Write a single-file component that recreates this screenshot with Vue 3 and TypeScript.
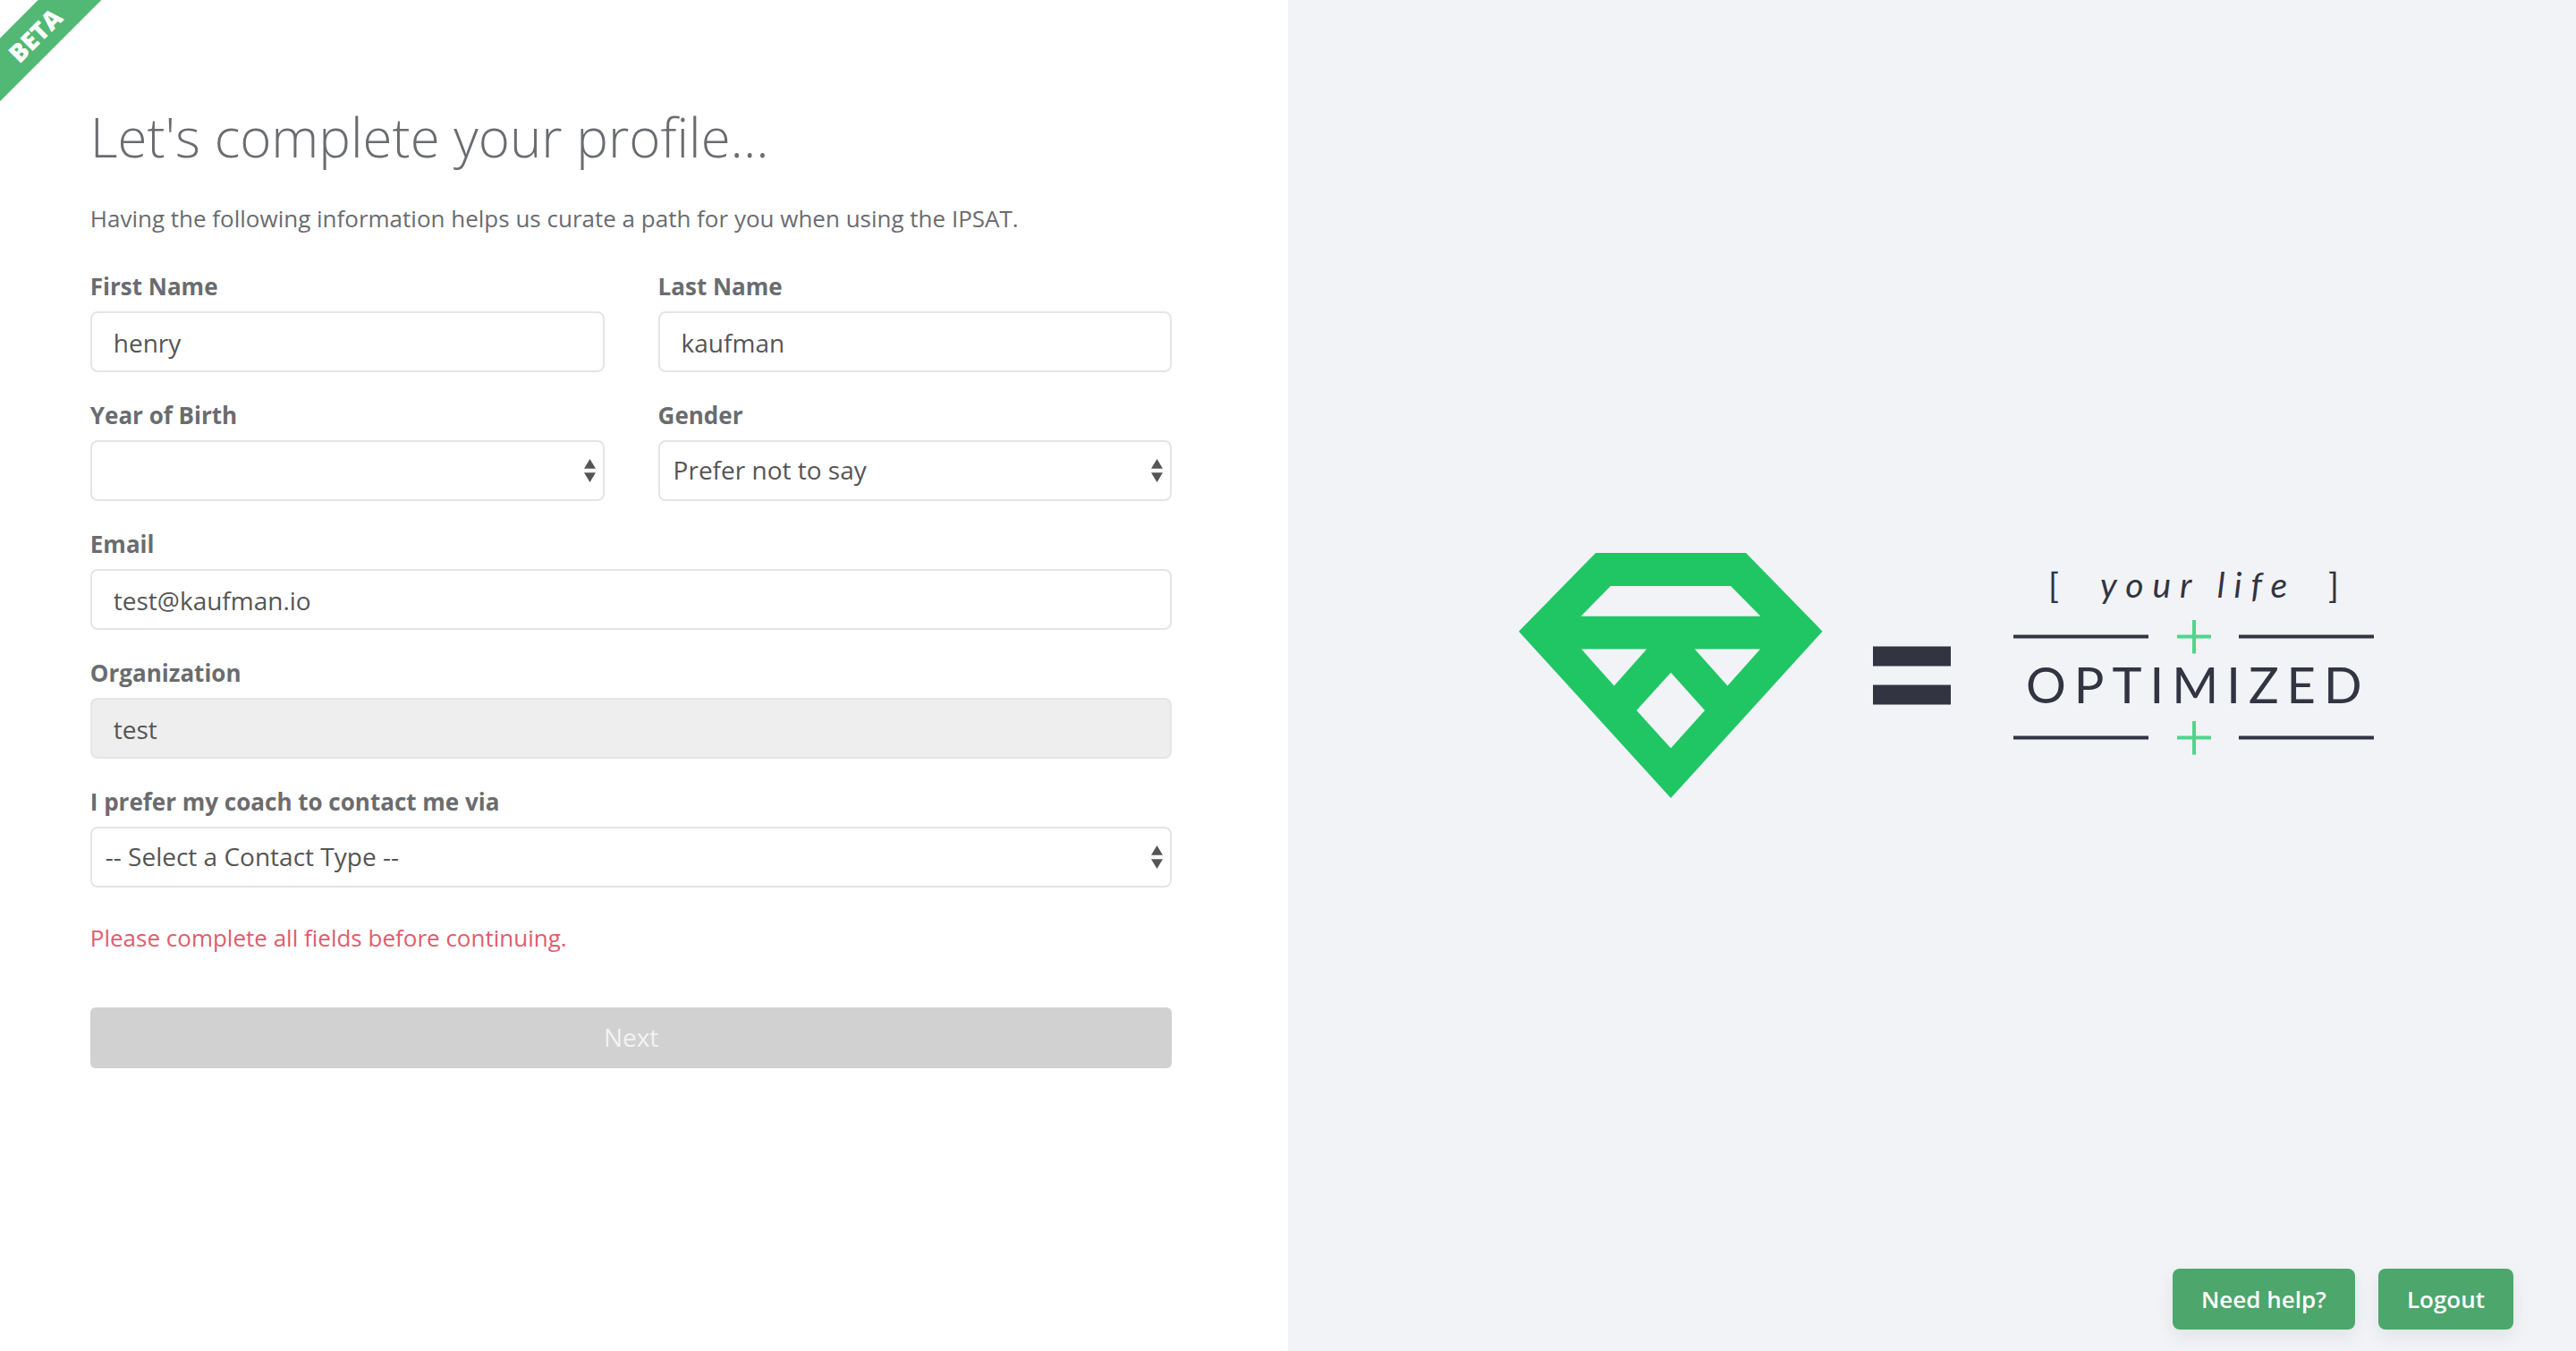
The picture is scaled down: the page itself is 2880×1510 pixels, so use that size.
<script setup lang="ts">
import { reactive } from 'vue'

interface Profile {
  firstName: string
  lastName: string
  birthYear: string
  gender: string
  email: string
  organization: string
  contactType: string
}

const profile = reactive<Profile>({
  firstName: 'henry',
  lastName: 'kaufman',
  birthYear: '',
  gender: 'Prefer not to say',
  email: 'test@kaufman.io',
  organization: 'test',
  contactType: '',
})

const genders: string[] = ['Prefer not to say']
</script>

<template>
  <main class="page">
    <div class="ribbon">BETA</div>

    <section class="profile">
      <h1>Let's complete your profile...</h1>
      <p class="intro">Having the following information helps us curate a path for you when using the IPSAT.</p>

      <form class="form" @submit.prevent>
        <div class="row">
          <div class="field">
            <label for="first-name">First Name</label>
            <input id="first-name" v-model="profile.firstName" type="text" />
          </div>
          <div class="field">
            <label for="last-name">Last Name</label>
            <input id="last-name" v-model="profile.lastName" type="text" />
          </div>
        </div>

        <div class="row">
          <div class="field">
            <label for="birth-year">Year of Birth</label>
            <div class="select">
              <select id="birth-year" v-model="profile.birthYear">
                <option value=""></option>
              </select>
              <svg class="arrows" viewBox="0 0 13 26" aria-hidden="true">
                <path d="M6.5 0 13 10.700H0zM0 15.300H13L6.500 26z" />
              </svg>
            </div>
          </div>
          <div class="field">
            <label for="gender">Gender</label>
            <div class="select">
              <select id="gender" v-model="profile.gender">
                <option v-for="g in genders" :key="g" :value="g">{{ g }}</option>
              </select>
              <svg class="arrows" viewBox="0 0 13 26" aria-hidden="true">
                <path d="M6.5 0 13 10.700H0zM0 15.300H13L6.500 26z" />
              </svg>
            </div>
          </div>
        </div>

        <div class="field">
          <label for="email">Email</label>
          <input id="email" v-model="profile.email" type="email" />
        </div>

        <div class="field">
          <label for="organization">Organization</label>
          <input id="organization" v-model="profile.organization" type="text" disabled />
        </div>

        <div class="field">
          <label for="contact-type">I prefer my coach to contact me via</label>
          <div class="select">
            <select id="contact-type" v-model="profile.contactType">
              <option value="">-- Select a Contact Type --</option>
            </select>
            <svg class="arrows" viewBox="0 0 13 26" aria-hidden="true">
              <path d="M6.5 0 13 10.700H0zM0 15.300H13L6.500 26z" />
            </svg>
          </div>
        </div>

        <p class="error" role="alert">Please complete all fields before continuing.</p>
        <button class="next" type="submit" disabled>Next</button>
      </form>
    </section>

    <aside class="brand">
      <svg class="logo" viewBox="0 0 1008 320" role="img" aria-label="Your life optimized">
        <path
          class="gem"
          fill-rule="evenodd"
          d="M128 23H296L381.500 110.700 212 297 42 110.700ZM144.700 60 111.500 93.700H312.300L279 60ZM112 130.500 148.600 171.500 185 130.500ZM238.700 130.500 275.400 171.500 312 130.500ZM212 156.700 173.700 199 212 241.300 250 199Z"
        />
        <path class="ink" d="M438 127.500H525V149.500H438ZM438 170.500H525V192.500H438Z" />
        <path class="ink" d="M595 114.500H746V118.500H595ZM847 114.500H998V118.500H847ZM595 227.500H746V231.500H595ZM847 227.500H998V231.500H847Z" />
        <path class="plus" d="M778 116.500H816M797 98V135.500M778 229.500H816M797 211V248.500" />
        <text class="ink life" x="634" y="73">[</text>
        <text class="ink life slanted" x="692" y="73">your life</text>
        <text class="ink life" x="947" y="73">]</text>
        <text class="ink optimized" x="609" y="191">OPTIMIZED</text>
      </svg>
    </aside>

    <nav class="actions">
      <button type="button">Need help?</button>
      <button type="button">Logout</button>
    </nav>
  </main>
</template>

<style>
body {
  margin: 0;
  background: #fff;
}
</style>

<style scoped>
.page {
  position: relative;
  display: grid;
  grid-template-columns: 1fr 1fr;
  min-height: 100vh;
  overflow: hidden;
  color: #6a6c6f;
  font-family: "Open Sans", "Noto Sans", sans-serif;
  font-size: 26px;
}

.page * {
  box-sizing: border-box;
}

.ribbon {
  position: absolute;
  top: 14px;
  left: -61px;
  width: 200px;
  background: #52b874;
  color: #fff;
  font-size: 28px;
  font-weight: 800;
  line-height: 50px;
  text-align: center;
  transform: rotate(-45deg);
}

.profile {
  min-width: 0;
  padding: 111px 9% 80px 7%;
}

h1 {
  margin: 0;
  font-size: 60px;
  font-weight: 300;
  line-height: 84px;
}

.intro {
  margin: 29px 0 0;
  line-height: 40px;
}

.form {
  display: flex;
  flex-direction: column;
  gap: 26px;
  margin-top: 34px;
}

.row {
  display: grid;
  grid-template-columns: 1fr 1fr;
  gap: 60px;
}

.field {
  display: flex;
  flex-direction: column;
  gap: 6px;
  min-width: 0;
}

label {
  font-weight: 700;
  line-height: 44px;
}

input,
select {
  width: 100%;
  height: 68px;
  margin: 0;
  border: 2px solid #e4e5e7;
  border-radius: 8px;
  background: #fff;
  color: #555;
  font: inherit;
  font-size: 28px;
}

input {
  padding: 2px 24px 0;
}

input:disabled {
  background: #eee;
  opacity: 1;
}

.select {
  position: relative;
}

select {
  display: block;
  padding: 0 40px 2px 15px;
  appearance: none;
}

.arrows {
  position: absolute;
  top: 21px;
  right: 10px;
  width: 13px;
  height: 26px;
  fill: #555;
  pointer-events: none;
}

.error {
  margin: 8px 0 30px;
  color: #e05c6e;
  line-height: 44px;
}

button {
  height: 68px;
  border: 0;
  font: inherit;
}

.next {
  padding: 0 0 2px;
  border-radius: 6px;
  background: #d1d1d1;
  color: #f3f3f3;
  font-size: 28px;
}

.brand {
  display: flex;
  align-items: center;
  justify-content: center;
  background: #f1f3f7;
}

.logo {
  width: 70%;
}

.gem {
  fill: #21c664;
}

.ink {
  fill: #323441;
}

.plus {
  fill: none;
  stroke: #4fd68c;
  stroke-width: 4;
}

.life,
.optimized {
  font-family: Lato, sans-serif;
}

.life {
  font-size: 39px;
}

.slanted {
  font-style: italic;
  letter-spacing: 10px;
}

.optimized {
  font-size: 56px;
  letter-spacing: 9px;
}

.actions {
  position: absolute;
  right: 70px;
  bottom: 24px;
  display: flex;
  gap: 26px;
}

.actions button {
  padding: 0 32px;
  border-radius: 8px;
  background: #4da66c;
  box-shadow: 0 8px 20px rgba(0, 0, 0, 0.07);
  color: #fff;
  font-weight: 600;
}
</style>
